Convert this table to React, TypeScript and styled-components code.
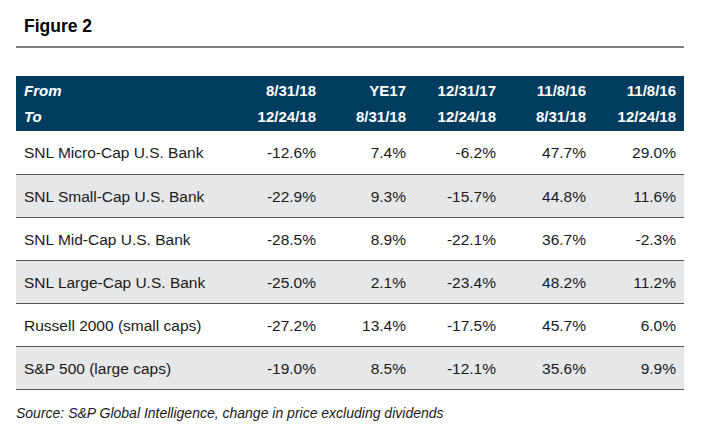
import styled, { createGlobalStyle } from "styled-components";

const GlobalStyle = createGlobalStyle`
  body {
    margin: 0;
    background: #ffffff;
    font-family: "Liberation Sans", Arial, Helvetica, sans-serif;
    color: #111111;
  }
`;

const Page = styled.div`
  padding: 16px 26px 0 16px;
  width: 668px;
`;

const Title = styled.h2`
  margin: 0;
  padding: 0 0 10px 8px;
  font-size: 17.5px;
  line-height: 20px;
  font-weight: 700;
  color: #000;
  border-bottom: 2px solid #7f7f7f;
`;

const Table = styled.table`
  margin-top: 28px;
  width: 668px;
  border-collapse: collapse;
  table-layout: fixed;
  font-size: 15px;
`;

const HeadRow = styled.tr`
  background: #003d5f;
  color: #ffffff;
`;

const HeadCell = styled.th<{ $first?: boolean; $top?: boolean }>`
  box-sizing: border-box;
  height: 27.5px;
  padding: ${(p) => (p.$top ? "2px 8px 0 8px" : "0 8px 2px 8px")};
  text-align: ${(p) => (p.$first ? "left" : "right")};
  font-weight: 700;
  font-style: ${(p) => (p.$first ? "italic" : "normal")};
  white-space: nowrap;
`;

const Row = styled.tr<{ $shaded: boolean }>`
  background: ${(p) => (p.$shaded ? "#e6e7e9" : "#ffffff")};
  border-bottom: 1px solid #555555;
`;

const Cell = styled.td<{ $first?: boolean }>`
  box-sizing: border-box;
  height: 43px;
  padding: 2px 8px 0 8px;
  text-align: ${(p) => (p.$first ? "left" : "right")};
  white-space: nowrap;
  font-size: 15.5px;
  color: #1a1a1a;
`;

const Source = styled.p`
  margin: 15px 0 0 0;
  font-size: 14px;
  line-height: 16px;
  font-style: italic;
  color: #1a1a1a;
`;

const from = ["8/31/18", "YE17", "12/31/17", "11/8/16", "11/8/16"];
const to = ["12/24/18", "8/31/18", "12/24/18", "8/31/18", "12/24/18"];

const rows = [
  { name: "SNL Micro-Cap U.S. Bank", v: ["-12.6%", "7.4%", "-6.2%", "47.7%", "29.0%"] },
  { name: "SNL Small-Cap U.S. Bank", v: ["-22.9%", "9.3%", "-15.7%", "44.8%", "11.6%"] },
  { name: "SNL Mid-Cap U.S. Bank", v: ["-28.5%", "8.9%", "-22.1%", "36.7%", "-2.3%"] },
  { name: "SNL Large-Cap U.S. Bank", v: ["-25.0%", "2.1%", "-23.4%", "48.2%", "11.2%"] },
  { name: "Russell 2000 (small caps)", v: ["-27.2%", "13.4%", "-17.5%", "45.7%", "6.0%"] },
  { name: "S&P 500 (large caps)", v: ["-19.0%", "8.5%", "-12.1%", "35.6%", "9.9%"] },
];

const App = () => {
  return (
    <Page>
      <GlobalStyle />
      <Title>Figure 2</Title>
      <Table>
        <colgroup>
          <col style={{ width: 218 }} />
          <col style={{ width: 90 }} />
          <col style={{ width: 90 }} />
          <col style={{ width: 90 }} />
          <col style={{ width: 90 }} />
          <col style={{ width: 90 }} />
        </colgroup>
        <thead>
          <HeadRow>
            <HeadCell $first $top>From</HeadCell>
            {from.map((d, i) => (
              <HeadCell key={i} $top>{d}</HeadCell>
            ))}
          </HeadRow>
          <HeadRow>
            <HeadCell $first>To</HeadCell>
            {to.map((d, i) => (
              <HeadCell key={i}>{d}</HeadCell>
            ))}
          </HeadRow>
        </thead>
        <tbody>
          {rows.map((r, i) => (
            <Row key={r.name} $shaded={i % 2 === 1}>
              <Cell $first>{r.name}</Cell>
              {r.v.map((x, j) => (
                <Cell key={j}>{x}</Cell>
              ))}
            </Row>
          ))}
        </tbody>
      </Table>
      <Source>Source: S&amp;P Global Intelligence, change in price excluding dividends</Source>
    </Page>
  );
};

export default App;
